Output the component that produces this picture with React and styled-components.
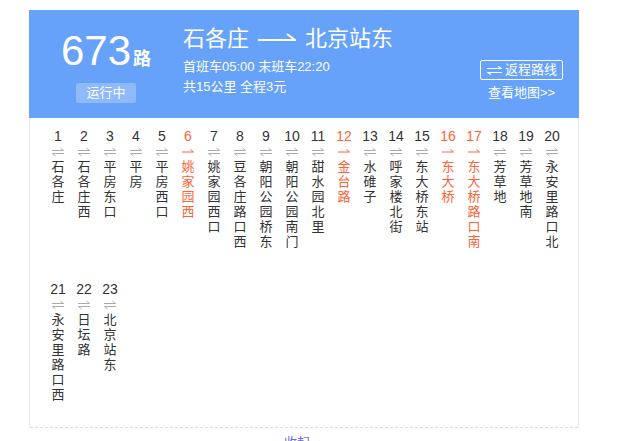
import React from "react";
import styled, { createGlobalStyle } from "styled-components";

const Global = createGlobalStyle`
  html, body {
    margin: 0;
    padding: 0;
    overflow: hidden;
    background: #fff;
  }
  body {
    font-family: "Liberation Sans", "Noto Sans CJK SC", sans-serif;
    color: #333;
  }
`;

const Page = styled.div`
  padding: 10px 0 0 29px;
`;

const Panel = styled.div`
  width: 550px;
`;

const Header = styled.header`
  display: flex;
  height: 108px;
  background: #66a1fa;
  color: #fff;
`;

const LineBlock = styled.div`
  width: 154px;
  display: flex;
  flex-direction: column;
  align-items: center;
  padding-top: 20px;
`;

const LineNo = styled.div`
  font-family: "Liberation Sans", Arial, sans-serif;
  font-size: 42px;
  line-height: 42px;
  white-space: nowrap;
`;

const LineUnit = styled.span`
  font-family: "Noto Sans CJK SC", sans-serif;
  font-size: 18px;
  font-weight: 700;
  margin-left: 2px;
`;

const StatusBadge = styled.div`
  margin-top: 5px;
  height: 20px;
  line-height: 20px;
  padding: 0 10px;
  font-size: 13px;
  background: #8ebafc;
  border-radius: 2px;
`;

const RouteInfo = styled.div`
  padding-top: 13px;
`;

const RouteTitle = styled.div`
  display: flex;
  align-items: center;
  font-size: 22px;
  line-height: 26px;
  font-family: "Noto Sans CJK SC", sans-serif;
  margin-bottom: 8px;
`;

const TitleArrow = styled.svg`
  margin: 0 9px;
  flex: none;
`;

const InfoLine = styled.div`
  font-size: 13px;
  line-height: 20px;
  white-space: nowrap;
`;

const Actions = styled.div`
  margin-left: auto;
  padding: 50px 16px 0 0;
  display: flex;
  flex-direction: column;
  align-items: center;
`;

const ReturnButton = styled.div`
  display: flex;
  align-items: center;
  gap: 3px;
  height: 18px;
  padding: 0 5px 0 6px;
  border: 1px solid #fff;
  border-radius: 2px;
  font-size: 13px;
  line-height: 18px;
`;

const MapLink = styled.div`
  margin-top: 3px;
  font-size: 13px;
  line-height: 20px;
`;

const StationArea = styled.div`
  display: flex;
  flex-wrap: wrap;
  row-gap: 33px;
  padding: 10px 0 26px 15px;
  border-left: 1px solid #e8e8e8;
  border-right: 1px solid #e8e8e8;
`;

const Station = styled.div`
  width: 26px;
  display: flex;
  flex-direction: column;
  align-items: center;
  color: ${(p) => (p.$hot ? "#ff6236" : "#333")};
`;

const StationNo = styled.div`
  font-size: 14px;
  line-height: 16px;
`;

const DirIcon = styled.svg`
  display: block;
  margin-top: 2px;
  height: 12px;
`;

const StationName = styled.div`
  display: flex;
  flex-direction: column;
  align-items: center;
  font-family: "Noto Sans CJK SC", sans-serif;
  font-size: 13px;
`;

/* one character per line of the vertical station name */
const NameChar = styled.span`
  display: block;
  height: 15px;
  line-height: 15px;
`;

const Toggle = styled.div`
  display: flex;
  justify-content: center;
  align-items: center;
  gap: 5px;
  padding-top: 5px;
  margin: 0 1px;
  border-top: 1px dashed #ddd;
  font-size: 13px;
  line-height: 20px;
  color: #6a6ad5;
`;

const stations = [
  ["石各庄"],
  ["石各庄西"],
  ["平房东口"],
  ["平房"],
  ["平房西口"],
  ["姚家园西", true],
  ["姚家园西口"],
  ["豆各庄路口西"],
  ["朝阳公园桥东"],
  ["朝阳公园南门"],
  ["甜水园北里"],
  ["金台路", true],
  ["水碓子"],
  ["呼家楼北街"],
  ["东大桥东站"],
  ["东大桥", true],
  ["东大桥路口南", true],
  ["芳草地"],
  ["芳草地南"],
  ["永安里路口北"],
  ["永安里路口西"],
  ["日坛路"],
  ["北京站东"],
];

function BothWays() {
  return (
    <DirIcon width="12" viewBox="0 0 12 12">
      <g stroke="#aaa" strokeWidth="1" fill="none">
        <path d="M0 4.5H11.5L8.5 2" />
        <path d="M12 7.5H0.5L3.5 10" />
      </g>
    </DirIcon>
  );
}

function OneWay() {
  return (
    <DirIcon width="12" viewBox="0 0 12 12">
      <path d="M0 6H11.5L8.5 3.5" stroke="#ff6236" strokeWidth="1" fill="none" />
    </DirIcon>
  );
}

export default function App() {
  return (
    <Page>
      <Global />
      <Panel>
        <Header>
          <LineBlock>
            <LineNo>
              673<LineUnit>路</LineUnit>
            </LineNo>
            <StatusBadge>运行中</StatusBadge>
          </LineBlock>
          <RouteInfo>
            <RouteTitle>
              石各庄
              <TitleArrow width="38" height="14" viewBox="0 0 38 14">
                <path d="M0 11H37L29 5" stroke="#fff" strokeWidth="2" fill="none" />
              </TitleArrow>
              北京站东
            </RouteTitle>
            <InfoLine>首班车05:00 末班车22:20</InfoLine>
            <InfoLine>共15公里 全程3元</InfoLine>
          </RouteInfo>
          <Actions>
            <ReturnButton>
              <svg width="15" height="9" viewBox="0 0 15 9">
                <g stroke="#fff" strokeWidth="1.2" fill="none">
                  <path d="M0 2.5H14L11 0.3" />
                  <path d="M15 6.5H1L4 8.7" />
                </g>
              </svg>
              返程路线
            </ReturnButton>
            <MapLink>查看地图&gt;&gt;</MapLink>
          </Actions>
        </Header>
        <StationArea>
          {stations.map(([name, hot], i) => (
            <Station key={i} $hot={hot}>
              <StationNo>{i + 1}</StationNo>
              {hot ? <OneWay /> : <BothWays />}
              <StationName>
                {[...name].map((c, j) => (
                  <NameChar key={j}>{c}</NameChar>
                ))}
              </StationName>
            </Station>
          ))}
        </StationArea>
        <Toggle>
          收起
          <svg width="9" height="6" viewBox="0 0 9 6">
            <path d="M0.5 5.5L4.5 1.5L8.5 5.5" stroke="#6a6ad5" strokeWidth="1.2" fill="none" />
          </svg>
        </Toggle>
      </Panel>
    </Page>
  );
}
